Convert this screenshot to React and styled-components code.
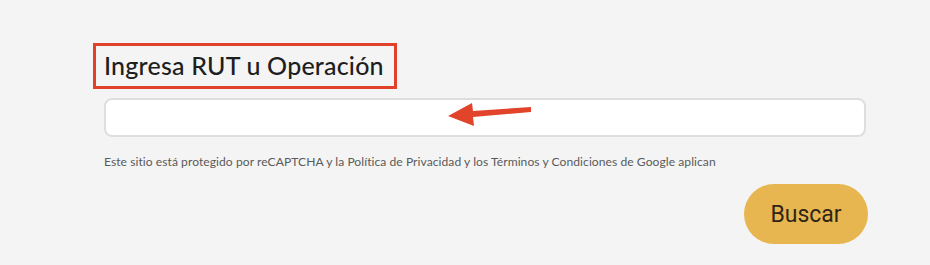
import styled, { createGlobalStyle } from "styled-components";

const GlobalStyle = createGlobalStyle`
    body {
        margin: 0;
        background-color: #f4f4f4;
        font-family: 'Lato', 'Liberation Sans', sans-serif;
    }
`;

const Page = styled.div`
    padding: 43px 0 0 93px;
    width: 775px;
`;

const TitleBox = styled.div`
    display: inline-block;
    box-sizing: border-box;
    width: 304px;
    height: 46px;
    border: 3px solid #e1402b;
    padding: 5px 0 0 8px;
`;

const Title = styled.h2`
    margin: 0;
    font-family: 'Lato', sans-serif;
    font-weight: 500;
    font-size: 25px;
    line-height: 28px;
    letter-spacing: 0.2px;
    color: #1e1e1e;
`;

const Form = styled.div`
    display: flex;
    flex-direction: column;
    margin-left: 11px;
`;

const InputWrap = styled.div`
    position: relative;
    margin-top: 9px;
`;

const Input = styled.input`
    box-sizing: border-box;
    width: 762px;
    height: 39px;
    border: 2px solid #dedede;
    border-radius: 8px;
    background-color: #fff;
    outline: none;
`;

const Arrow = styled.svg`
    position: absolute;
    left: 338px;
    top: 2px;
`;

const Notice = styled.p`
    margin: 17px 0 0 0;
    font-family: 'Lato', sans-serif;
    font-weight: 400;
    font-size: 12.1px;
    color: #5a5a5a;
    letter-spacing: 0.05px;
`;

const Actions = styled.div`
    display: flex;
    justify-content: flex-end;
    margin-top: 15px;
`;

const SearchButton = styled.button`
    width: 124px;
    height: 60px;
    border: none;
    border-radius: 30px;
    background-color: #e8b651;
    font-family: 'Roboto', sans-serif;
    font-size: 23px;
    color: #2f2618;
    cursor: pointer;
    padding: 0;
`;

export default function App() {
    return (
        <>
            <GlobalStyle />
            <Page>
                <TitleBox>
                    <Title>Ingresa RUT u Operación</Title>
                </TitleBox>
                <Form>
                    <InputWrap>
                        <Input type="text" />
                        <Arrow width="90" height="30" viewBox="0 0 90 30">
                            <path d="M6 16 L30 3 L31 11 L89 7 L89 12 L31 17 L32 26 Z" fill="#e2432b" />
                        </Arrow>
                    </InputWrap>
                    <Notice>
                        Este sitio está protegido por reCAPTCHA y la Política de Privacidad y los Términos y Condiciones de Google aplican
                    </Notice>
                    <Actions>
                        <SearchButton>Buscar</SearchButton>
                    </Actions>
                </Form>
            </Page>
        </>
    );
}
